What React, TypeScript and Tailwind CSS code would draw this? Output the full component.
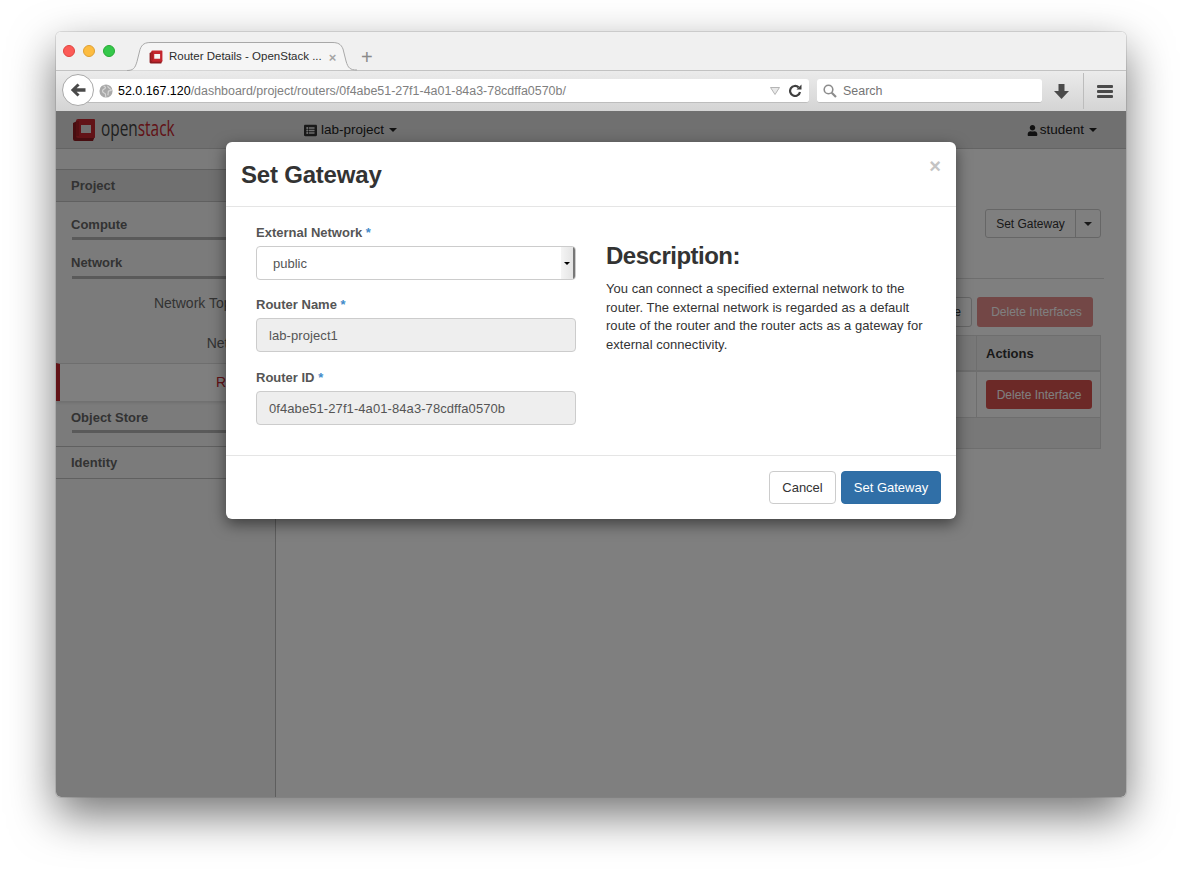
import { FaUser, FaListAlt } from "react-icons/fa";

const font = "font-['Liberation_Sans',Arial,sans-serif]";

function OpenstackMark({ size = 24 }: { size?: number }) {
  return (
    <svg width={size} height={size} viewBox="0 0 24 24">
      <path d="M1 5l4-2v15h18l-2 5H3a2 2 0 0 1-2-2z" fill="#8e1b20" />
      <path
        fillRule="evenodd"
        d="M6 1h16a1 1 0 0 1 1 1v17a1 1 0 0 1-1 1H6a2 2 0 0 1-2-2V3a2 2 0 0 1 2-2zM9 7v8h10V7z"
        fill="#c4262e"
      />
      <path d="M4 3h3v15H4z" fill="#a81f25" />
    </svg>
  );
}

function TrafficLights() {
  return (
    <div className="flex gap-[8px] pl-[7px] pt-[13px]">
      <span className="w-[12px] h-[12px] rounded-full bg-[#fc5b57] border border-[#e0443e]" />
      <span className="w-[12px] h-[12px] rounded-full bg-[#fdbc40] border border-[#dea034]" />
      <span className="w-[12px] h-[12px] rounded-full bg-[#34c84a] border border-[#27aa35]" />
    </div>
  );
}

function BrowserTab() {
  return (
    <div className="relative z-10 w-[230px] h-[29px] mt-[10px] ml-[12px] shrink-0">
      <svg className="absolute inset-0" width="230" height="29" viewBox="0 0 230 29">
        <path
          d="M0 28.500c6 0 8-2 10-9l3-12C15 2 18 .5 24 .5H205c6 0 9 1.500 11 6.500l3 12c2 7 4 9 11 9"
          fill="#f5f5f5"
          stroke="#a8a8a8"
        />
      </svg>
      <div className="relative flex items-center h-full pl-[22px] pt-[1px]">
        <OpenstackMark size={14} />
        <span className="ml-[6px] text-[11.5px] text-[#2c2c2c] whitespace-nowrap">Router Details - OpenStack ...</span>
        <span className="ml-[7px] text-[13px] font-bold leading-none text-[#a5a5a5]">×</span>
      </div>
    </div>
  );
}

function UrlBar() {
  return (
    <div className="flex items-center h-[41px] shrink-0 border-t border-[#c2c2c2] bg-gradient-to-b from-[#ebebeb] to-[#d4d4d4] relative">
      <div className="absolute left-[6px] top-[3px] w-[32px] h-[32px] rounded-full bg-white border border-[#a9a9a9] flex items-center justify-center z-10">
        <svg width="16" height="14" viewBox="0 0 16 14">
          <path d="M7.500 0.500 9.600 2.600 6.600 5.300H15.500V8.700H6.600L9.600 11.400 7.500 13.500 0.800 7z" fill="#4a4a4a" />
        </svg>
      </div>
      <div className="ml-[24px] w-[729px] h-[24px] bg-white rounded-[3px] border-b border-[#bdbdbd] flex items-center pl-[19px] pr-[7px]">
        <svg width="14" height="14" viewBox="0 0 16 16" className="shrink-0">
          <circle cx="8" cy="8" r="7.500" fill="#a9a9a9" />
          <path d="M5 2c2 1 3 2 2 3S4 6 4 8s2 2 3 3 0 3 1 4M10 2c0 2 1 2 2 3s2 1 2 2-2 0-3 1 0 3-1 5" fill="none" stroke="#d5d5d5" strokeWidth="1.400" />
        </svg>
        <span className="ml-[5px] pt-[2px] text-[12.45px] whitespace-nowrap">
          <span className="text-black">52.0.167.120</span>
          <span className="text-[#808080]">/dashboard/project/routers/0f4abe51-27f1-4a01-84a3-78cdffa0570b/</span>
        </span>
        <svg width="10" height="8" viewBox="0 0 10 8" className="ml-auto mr-[10px]">
          <path d="M.5.5h9L5 7.500z" fill="#e8e8e8" stroke="#b5b5b5" />
        </svg>
        <svg width="13" height="13" viewBox="0 0 13 13" className="-ml-[1px]">
          <path d="M9.600 3.400A5 5 0 1 0 11 8" fill="none" stroke="#3f3f3f" strokeWidth="2.200" />
          <path d="M7.500 5.500 12.500 5.500 12.500.5z" fill="#3f3f3f" />
        </svg>
      </div>
      <div className="ml-[8px] w-[225px] h-[24px] bg-white rounded-[3px] border-b border-[#bdbdbd] flex items-center pl-[6px]">
        <svg width="14" height="14" viewBox="0 0 14 14">
          <circle cx="5.500" cy="5.500" r="4.300" fill="none" stroke="#8c8c8c" strokeWidth="1.600" />
          <path d="m8.700 8.700 4.300 4.300" stroke="#8c8c8c" strokeWidth="2.200" />
        </svg>
        <span className="ml-[6px] pt-[2px] text-[12.45px] text-[#747474]">Search</span>
      </div>
      <svg width="15" height="15" viewBox="0 0 15 15" className="ml-[12px]">
        <path d="M4.500 0h6v7H15L7.500 15 0 7h4.500z" fill="#4a4a4a" />
      </svg>
      <div className="ml-[14px] w-px h-[36px] bg-[#bcbcbc]" />
      <div className="ml-[13px] flex flex-col gap-[2px]">
        <span className="block w-[16px] h-[3px] bg-[#4a4a4a] rounded-[1px]" />
        <span className="block w-[16px] h-[3px] bg-[#4a4a4a] rounded-[1px]" />
        <span className="block w-[16px] h-[3px] bg-[#4a4a4a] rounded-[1px]" />
      </div>
    </div>
  );
}

function Caret() {
  return <span className="inline-block ml-[5px] align-middle border-x-[4px] border-x-transparent border-t-[4px] border-t-current" />;
}

function Navbar() {
  return (
    <div className="flex items-center h-[38px] bg-[#e0e0e0] border-b border-[#c8c8c8] text-[13.5px] text-[#222] shrink-0">
      <div className="ml-[16px] w-[232px] flex items-center">
        <OpenstackMark size={24} />
        <span className="ml-[5px] -mt-[5px] text-[22px] leading-none origin-left scale-x-[0.7] font-['Open_Sans',sans-serif] whitespace-nowrap">
          <span className="text-[#3e3e3e]">open</span>
          <span className="text-[#c4262e]">stack</span>
        </span>
      </div>
      <div className="flex items-center pt-[1px]">
        <FaListAlt className="text-[13px] text-[#333] mr-[4px]" />
        <span>lab-project</span>
        <Caret />
      </div>
      <div className="ml-auto mr-[29px] flex items-center pt-[1px]">
        <FaUser className="text-[11px] mr-[2px]" />
        <span>student</span>
        <Caret />
      </div>
    </div>
  );
}

function SideGroup({ label, height, labelTop }: { label: string; height: number; labelTop: number }) {
  return (
    <div style={{ height }} className="relative">
      <div style={{ paddingTop: labelTop }} className="pl-[15px] text-[13px] font-bold leading-[16px] text-[#666]">
        {label}
      </div>
      <div className="absolute left-[16px] right-0 bottom-0 h-[3px] bg-[#b5b5b5]" />
    </div>
  );
}

function Sidebar() {
  return (
    <aside className="w-[220px] shrink-0 border-r border-[#bcbcbc] bg-[#f7f7f7] pt-[20px]">
      <div className="h-[33px] bg-[#e0e0e0] border-y border-[#c0c0c0] pl-[15px] pt-[8px] text-[13px] font-bold leading-[16px] text-[#666]">
        Project
      </div>
      <SideGroup label="Compute" height={38} labelTop={15} />
      <SideGroup label="Network" height={39} labelTop={15} />
      <div className="h-[42px] pr-[10px] pt-[16px] text-right text-[14px] leading-[16px] text-[#666]">Network Topology</div>
      <div className="h-[42px] pr-[10px] pt-[14px] text-right text-[14px] leading-[16px] text-[#666]">Networks</div>
      <div className="h-[38px] border-t border-[#dcdcdc] border-l-[4px] border-l-[#c4262e] bg-white pr-[10px] pt-[10px] text-right text-[14px] leading-[16px] text-[#c4262e] shadow-[0_2px_3px_rgba(0,0,0,0.1)]">
        Routers
      </div>
      <SideGroup label="Object Store" height={32} labelTop={9} />
      <div className="h-[33px] mt-[13px] border-y border-[#c0c0c0] pl-[15px] pt-[8px] text-[13px] font-bold leading-[16px] text-[#666]">
        Identity
      </div>
    </aside>
  );
}

function PageContent() {
  return (
    <main className="flex-1 bg-white pt-[60px] pl-[10px] pr-[25px] text-[12px]">
      <div className="flex justify-end h-[69px]">
        <div className="flex w-[116px] h-[29px] rounded-[3px] border border-[#ccc] text-[#333]">
          <span className="w-[90px] pt-[1px] text-center leading-[27px] border-r border-[#ccc]">Set Gateway</span>
          <span className="flex-1 flex items-center justify-center">
            <span className="border-x-[4px] border-x-transparent border-t-[4px] border-t-current" />
          </span>
        </div>
      </div>
      <div className="border-t border-[#ddd] -mr-[3px]" />
      <div className="flex justify-end gap-[5px] mt-[18px] pr-[8px]">
        <span className="h-[30px] px-[10px] leading-[28px] rounded-[3px] border border-[#ccc] text-[#333]">Add Interface</span>
        <span className="h-[30px] w-[116px] pl-[3px] text-center leading-[30px] rounded-[3px] bg-[#d9534f] text-white opacity-65">Delete Interfaces</span>
      </div>
      <div className="mt-[8px] border border-[#ddd] text-[#333]">
        <div className="flex h-[36px] border-b-2 border-[#ddd] bg-[#f1f1f1]">
          <div className="flex-1" />
          <div className="w-[124px] border-l border-[#ddd] pl-[9px] pt-[1px] leading-[34px] text-[13px] font-bold">Actions</div>
        </div>
        <div className="flex h-[46px] border-b border-[#ddd]">
          <div className="flex-1" />
          <div className="w-[124px] border-l border-[#ddd] pl-[9px] pt-[8px]">
            <span className="block w-[106px] h-[29px] pt-[1px] text-center leading-[29px] rounded-[3px] bg-[#d9534f] text-white">Delete Interface</span>
          </div>
        </div>
        <div className="h-[30px] bg-[#f1f1f1]" />
      </div>
    </main>
  );
}

function Field({ label, value, className }: { label: string; value: string; className?: string }) {
  return (
    <div className={className}>
      <label className="block h-[18px] mb-[5px] pt-[1px] text-[13px] font-bold leading-[18px] text-[#555]">
        {label} <span className="text-[#428bca]">*</span>
      </label>
      <div className="h-[34px] rounded-[4px] border border-[#ccc] bg-[#eee] pl-[12px] pt-[1px] text-[13px] leading-[32px] text-[#555] tracking-[0.08px]">{value}</div>
    </div>
  );
}

function GatewayModal() {
  return (
    <div className="absolute left-[170px] top-[31px] w-[730px] rounded-[6px] bg-white shadow-[0_5px_15px_rgba(0,0,0,0.5)] text-[#333]">
      <div className="relative h-[65px] border-b border-[#e5e5e5] pl-[15px] pt-[18px]">
        <h3 className="text-[24px] font-bold leading-[30px] text-[#333] tracking-[-0.2px]">Set Gateway</h3>
        <span className="absolute right-[15px] top-[14px] text-[20px] font-bold leading-[20px] text-[#c4c4c4]">×</span>
      </div>
      <div className="flex h-[248px] pl-[30px] pt-[16px]">
        <div className="w-[320px]">
          <div className="mb-[15px]">
            <label className="block h-[18px] mb-[5px] pt-[1px] text-[13px] font-bold leading-[18px] text-[#555]">
              External Network <span className="text-[#428bca]">*</span>
            </label>
            <div className="relative h-[34px] rounded-[4px] border border-[#ccc] bg-white pl-[16px] pt-[1px] text-[13px] leading-[32px] text-[#555] overflow-hidden">
              public
              <div className="absolute right-0 top-0 bottom-0 w-[14px] flex items-center justify-center bg-gradient-to-r from-[#f4f4f4] to-[#e4e4e4] border-r-2 border-[#777]">
                <span className="border-x-[3px] border-x-transparent border-t-[3px] border-t-black" />
              </div>
            </div>
          </div>
          <Field label="Router Name" value="lab-project1" className="mb-[16px]" />
          <Field label="Router ID" value="0f4abe51-27f1-4a01-84a3-78cdffa0570b" />
        </div>
        <div className="ml-[30px] w-[320px] pt-[18px]">
          <h3 className="text-[24px] font-bold leading-[30px] text-[#333] tracking-[-0.5px]">Description:</h3>
          <p className="mt-[9px] text-[13px] leading-[18.57px] text-[#333] tracking-[0.04px]">
            You can connect a specified external network to the router. The external network is regarded as a default route of the router and the router acts as a gateway for external connectivity.
          </p>
        </div>
      </div>
      <div className="flex justify-end gap-[5px] h-[64px] border-t border-[#e5e5e5] pt-[15px] pr-[15px] text-[13px]">
        <span className="h-[33px] w-[67px] rounded-[4px] border border-[#ccc] bg-white text-center leading-[31px] text-[#333]">Cancel</span>
        <span className="h-[33px] w-[100px] rounded-[4px] border border-[#2e6da4] bg-[#306fa7] text-center leading-[31px] text-white">Set Gateway</span>
      </div>
    </div>
  );
}

export default function App() {
  return (
    <div className={`${font} w-[1182px] h-[877px] bg-white pt-[32px] pl-[56px] overflow-hidden`}>
      <div className="flex flex-col w-[1070px] h-[765px] rounded-[5px] overflow-hidden shadow-[0_0_0_1px_rgba(0,0,0,0.1),0_18px_45px_rgba(0,0,0,0.55)]">
        <div className="flex h-[38px] bg-[#f0f0f0] shrink-0">
          <TrafficLights />
          <BrowserTab />
          <span className="ml-[4px] mt-[13px] text-[20px] leading-[24px] text-[#8a8a8a]">+</span>
        </div>
        <UrlBar />
        <div className="relative flex-1 flex flex-col min-h-0">
          <Navbar />
          <div className="flex flex-1 min-h-0">
            <Sidebar />
            <PageContent />
          </div>
          <div className="absolute inset-0 bg-black/50" />
          <GatewayModal />
        </div>
      </div>
    </div>
  );
}
